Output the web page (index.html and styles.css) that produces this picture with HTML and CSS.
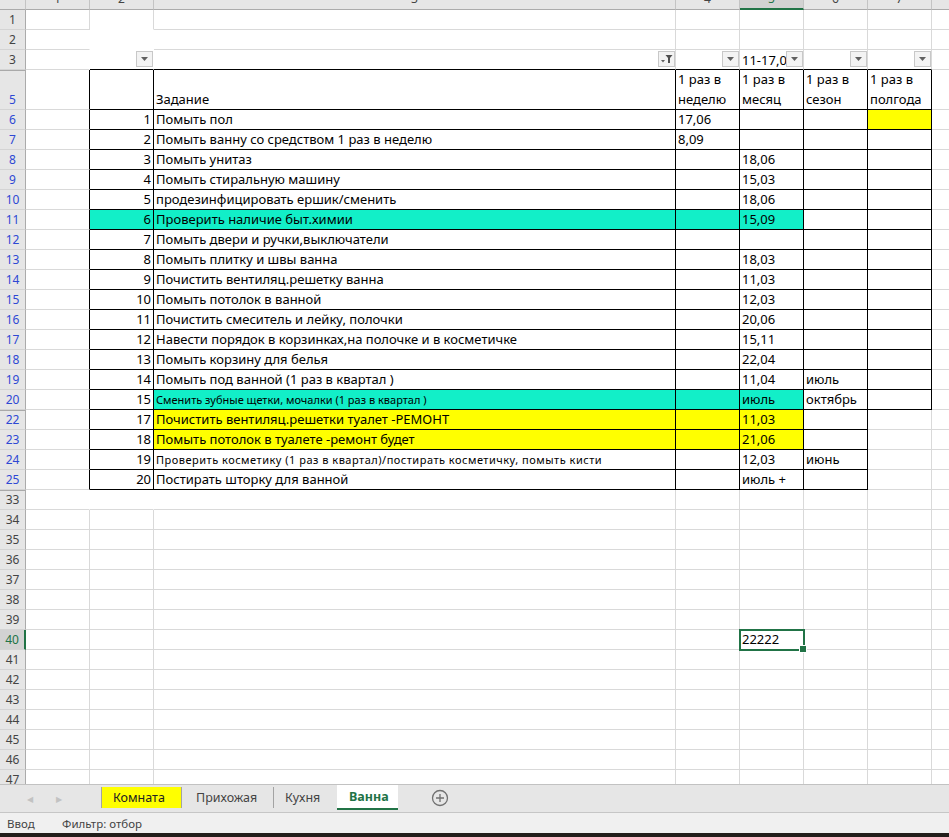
FILE: index.html
```html
<!DOCTYPE html>
<html lang="ru">
<head>
<meta charset="utf-8">
<title>Ванна</title>
<link rel="stylesheet" href="styles.css">
</head>
<body>
<div class="sheet">
  <div class="r hd"><span></span><span><em>1</em></span><span><em>2</em></span><span><em>3</em></span><span><em>4</em></span><span class="on"><em>5</em></span><span><em>6</em></span><span><em>7</em></span><span></span></div>

  <div class="r"><span class="rh">1</span><span></span><span class="nbm"></span><span></span><span></span><span></span><span></span><span></span><span></span></div>
  <div class="r"><span class="rh">2</span><span class="nr"></span><span class="nr nbm"></span><span></span><span></span><span></span><span></span><span></span><span></span></div>
  <div class="r"><span class="rh">3</span><span class="nr"></span>
    <span class="nr kb f"><i class="fb"><svg width="7" height="4" viewBox="0 0 7 4"><path d="M0 0h7L3.5 4z" fill="#606060"/></svg></i></span>
    <span class="kb f"><i class="fb"><svg width="12" height="10" viewBox="0 0 12 10"><path d="M0 6h4L2 8.5z" fill="#606060"/><path d="M4.5 1h7L9 4v5H7V4z" fill="#505050"/></svg></i></span>
    <span class="kb f"><i class="fb"><svg width="7" height="4" viewBox="0 0 7 4"><path d="M0 0h7L3.5 4z" fill="#606060"/></svg></i></span>
    <span class="kb f"><b class="tx">11-17,0</b><i class="fb"><svg width="7" height="4" viewBox="0 0 7 4"><path d="M0 0h7L3.5 4z" fill="#606060"/></svg></i></span>
    <span class="kb f"><i class="fb"><svg width="7" height="4" viewBox="0 0 7 4"><path d="M0 0h7L3.5 4z" fill="#606060"/></svg></i></span>
    <span class="kb f"><i class="fb"><svg width="7" height="4" viewBox="0 0 7 4"><path d="M0 0h7L3.5 4z" fill="#606060"/></svg></i></span>
    <span></span></div>

  <div class="r tall"><span class="rh b gap">5</span><span class="kl"></span><span class="k"></span><span class="k">Задание</span><span class="k">1 раз в<br>неделю</span><span class="k">1 раз в<br>месяц</span><span class="k">1 раз в<br>сезон</span><span class="k">1 раз в<br>полгода</span><span></span></div>

  <div class="r"><span class="rh b">6</span><span class="kl"></span><span class="k n">1</span><span class="k">Помыть пол</span><span class="k">17,06</span><span class="k"></span><span class="k"></span><span class="k ye"></span><span></span></div>
  <div class="r"><span class="rh b">7</span><span class="kl"></span><span class="k n">2</span><span class="k">Помыть ванну со средством 1 раз в неделю</span><span class="k">8,09</span><span class="k"></span><span class="k"></span><span class="k"></span><span></span></div>
  <div class="r"><span class="rh b">8</span><span class="kl"></span><span class="k n">3</span><span class="k">Помыть унитаз</span><span class="k"></span><span class="k">18,06</span><span class="k"></span><span class="k"></span><span></span></div>
  <div class="r"><span class="rh b">9</span><span class="kl"></span><span class="k n">4</span><span class="k">Помыть стиральную машину</span><span class="k"></span><span class="k">15,03</span><span class="k"></span><span class="k"></span><span></span></div>
  <div class="r"><span class="rh b">10</span><span class="kl"></span><span class="k n">5</span><span class="k">продезинфицировать ершик/сменить</span><span class="k"></span><span class="k">18,06</span><span class="k"></span><span class="k"></span><span></span></div>
  <div class="r"><span class="rh b">11</span><span class="kl"></span><span class="k n cy">6</span><span class="k cy">Проверить наличие быт.химии</span><span class="k cy"></span><span class="k cy">15,09</span><span class="k"></span><span class="k"></span><span></span></div>
  <div class="r"><span class="rh b">12</span><span class="kl"></span><span class="k n">7</span><span class="k">Помыть двери и ручки,выключатели</span><span class="k"></span><span class="k"></span><span class="k"></span><span class="k"></span><span></span></div>
  <div class="r"><span class="rh b">13</span><span class="kl"></span><span class="k n">8</span><span class="k">Помыть плитку и швы ванна</span><span class="k"></span><span class="k">18,03</span><span class="k"></span><span class="k"></span><span></span></div>
  <div class="r"><span class="rh b">14</span><span class="kl"></span><span class="k n">9</span><span class="k">Почистить вентиляц.решетку ванна</span><span class="k"></span><span class="k">11,03</span><span class="k"></span><span class="k"></span><span></span></div>
  <div class="r"><span class="rh b">15</span><span class="kl"></span><span class="k n">10</span><span class="k">Помыть потолок в ванной</span><span class="k"></span><span class="k">12,03</span><span class="k"></span><span class="k"></span><span></span></div>
  <div class="r"><span class="rh b">16</span><span class="kl"></span><span class="k n">11</span><span class="k">Почистить смеситель и лейку, полочки</span><span class="k"></span><span class="k">20,06</span><span class="k"></span><span class="k"></span><span></span></div>
  <div class="r"><span class="rh b">17</span><span class="kl"></span><span class="k n">12</span><span class="k">Навести порядок в корзинках,на полочке и в косметичке</span><span class="k"></span><span class="k">15,11</span><span class="k"></span><span class="k"></span><span></span></div>
  <div class="r"><span class="rh b">18</span><span class="kl"></span><span class="k n">13</span><span class="k">Помыть корзину для белья</span><span class="k"></span><span class="k">22,04</span><span class="k"></span><span class="k"></span><span></span></div>
  <div class="r"><span class="rh b">19</span><span class="kl"></span><span class="k n">14</span><span class="k">Помыть под ванной (1 раз в квартал )</span><span class="k"></span><span class="k">11,04</span><span class="k">июль</span><span class="k"></span><span></span></div>
  <div class="r"><span class="rh b">20</span><span class="kl"></span><span class="k n">15</span><span class="k cy sm">Сменить зубные щетки, мочалки (1 раз в квартал )</span><span class="k cy"></span><span class="k cy">июль</span><span class="k">октябрь</span><span class="k"></span><span></span></div>
  <div class="r"><span class="rh b gap">22</span><span class="kl"></span><span class="k n">17</span><span class="k ye">Почистить вентиляц.решетки туалет -РЕМОНТ</span><span class="k ye"></span><span class="k ye">11,03</span><span class="k"></span><span></span><span></span></div>
  <div class="r"><span class="rh b">23</span><span class="kl"></span><span class="k n">18</span><span class="k ye">Помыть потолок в туалете -ремонт будет</span><span class="k ye"></span><span class="k ye">21,06</span><span class="k"></span><span></span><span></span></div>
  <div class="r"><span class="rh b">24</span><span class="kl"></span><span class="k n">19</span><span class="k sm wide">Проверить косметику (1 раз в квартал)/постирать косметичку, помыть кисти</span><span class="k"></span><span class="k">12,03</span><span class="k">июнь</span><span></span><span></span></div>
  <div class="r"><span class="rh b">25</span><span class="kl"></span><span class="k n">20</span><span class="k">Постирать шторку для ванной</span><span class="k"></span><span class="k">июль +</span><span class="k"></span><span></span><span></span></div>

  <div class="r"><span class="rh gap">33</span><span class="nr"></span><span class="nr"></span><span></span><span></span><span></span><span></span><span></span><span></span></div>
  <div class="r"><span class="rh">34</span><span></span><span></span><span></span><span></span><span></span><span></span><span></span><span></span></div>
  <div class="r"><span class="rh">35</span><span></span><span></span><span></span><span></span><span></span><span></span><span></span><span></span></div>
  <div class="r"><span class="rh">36</span><span></span><span></span><span></span><span></span><span></span><span></span><span></span><span></span></div>
  <div class="r"><span class="rh">37</span><span></span><span></span><span></span><span></span><span></span><span></span><span></span><span></span></div>
  <div class="r"><span class="rh">38</span><span></span><span></span><span></span><span></span><span></span><span></span><span></span><span></span></div>
  <div class="r"><span class="rh">39</span><span></span><span></span><span></span><span></span><span></span><span></span><span></span><span></span></div>
  <div class="r"><span class="rh sel">40</span><span></span><span></span><span></span><span></span><span class="cur">22222</span><span></span><span></span><span></span></div>
  <div class="r"><span class="rh">41</span><span></span><span></span><span></span><span></span><span></span><span></span><span></span><span></span></div>
  <div class="r"><span class="rh">42</span><span></span><span></span><span></span><span></span><span></span><span></span><span></span><span></span></div>
  <div class="r"><span class="rh">43</span><span></span><span></span><span></span><span></span><span></span><span></span><span></span><span></span></div>
  <div class="r"><span class="rh">44</span><span></span><span></span><span></span><span></span><span></span><span></span><span></span><span></span></div>
  <div class="r"><span class="rh">45</span><span></span><span></span><span></span><span></span><span></span><span></span><span></span><span></span></div>
  <div class="r"><span class="rh">46</span><span></span><span></span><span></span><span></span><span></span><span></span><span></span><span></span></div>
  <div class="r"><span class="rh">47</span><span></span><span></span><span></span><span></span><span></span><span></span><span></span><span></span></div>
</div>

<div class="tabs">
  <span class="nav nav1">&#9664;</span><span class="nav">&#9654;</span>
  <div class="tablist">
    <i class="sep"></i>
    <span class="tab t1">Комната</span>
    <i class="sep"></i>
    <span class="tab t2">Прихожая</span>
    <i class="sep"></i>
    <span class="tab t3">Кухня</span>
    <span class="tab act">Ванна</span>
  </div>
  <svg class="add" width="18" height="18" viewBox="0 0 18 18"><circle cx="9" cy="9" r="7.5" fill="none" stroke="#707070" stroke-width="1.3"/><path d="M9 5v8M5 9h8" stroke="#707070" stroke-width="1.3"/></svg>
</div>
<div class="status"><span class="st1">Ввод</span><span>Фильтр: отбор</span></div>
<div class="strip"></div>
</body>
</html>
```
FILE: styles.css
```css
* { box-sizing: border-box; margin: 0; padding: 0; }
html, body { width: 949px; height: 837px; overflow: hidden; background: #fff; }
body { display: flex; flex-direction: column; font-family: "Noto Sans", "Open Sans", sans-serif; color: #000; }

.sheet { height: 784px; overflow: hidden; flex: none; }

.r { display: grid; grid-template-columns: 26px 64px 64px 522px 64px 64px 64px 64px 17px; height: 20px; }
.r.tall { height: 40px; }
.r > span {
  border-right: 1px solid #d9d9d9;
  border-bottom: 1px solid #d9d9d9;
  font-size: 13px;
  line-height: 19px;
  padding: 0 2px;
  white-space: nowrap;
  overflow: hidden;
}
.r > span:last-child { border-right: 0; }
.tall > span { display: flex; align-items: flex-end; white-space: normal; line-height: 19.5px; }

/* column header */
.hd { height: 10px; }
.hd > span {
  background: #e6e6e6;
  border-right: 1px solid #c4c4c4;
  border-bottom: 1px solid #ababab;
  font-size: 12px;
  color: #444;
  text-align: center;
  padding: 0;
  line-height: 20px;
}
.hd > span:last-child { border-right: 0; }
.hd > span em { display: block; font-style: normal; margin-top: -11px; }
.hd > .on { background: #d2d2d2; border-bottom: 2px solid #217346; color: #217346; }

/* row header */
.r > .rh {
  background: #e6e6e6;
  border-right: 1px solid #ababab;
  border-bottom: 1px solid #d4d4d4;
  color: #444;
  font-size: 12px;
  text-align: center;
  padding: 0;
  line-height: 19px;
}
.tall > .rh { justify-content: center; }
.r > .rh.b { color: #2e48d4; }
.r > .rh.gap { box-shadow: inset 0 1px 0 #a9a9a9; }
.r > .rh.sel { background: #d2d2d2; color: #217346; border-right: 2px solid #217346; }

/* gridline removal */
.r > .nr { border-right-color: transparent; }
.r > .nbm { border-bottom-color: transparent; }

/* table borders */
.r > .k { border-right-color: #000; border-bottom-color: #000; }
.r > .kl { border-right-color: #000; }
.r > .kb { border-bottom-color: #000; }

.n { text-align: right; }
.r > .sm { font-size: 11px; }
.r > .wide { letter-spacing: 0.5px; }
.cy { background: #12efc8; }
.ye { background: #ffff00; }

/* filter buttons */
.r > .f { display: flex; justify-content: flex-end; align-items: flex-start; padding: 1px 0 0 2px; }
.tx { flex: 1; overflow: hidden; font-weight: normal; line-height: 18px; white-space: nowrap; }
.fb {
  width: 17px; height: 16px; flex: none;
  border: 1px solid #c8c8c8; background: #f3f3f3;
  display: flex; align-items: center; justify-content: center;
}

/* active cell */
.r > .cur { position: relative; overflow: visible; outline: 2px solid #217346; outline-offset: -1px; }
.cur::after {
  content: ""; position: absolute; right: -4px; bottom: -4px;
  width: 6px; height: 6px; background: #217346; border: 1px solid #fff;
}

/* sheet tabs */
.tabs {
  height: 28px; flex: none; background: #e6e6e6; border-top: 1px solid #c2c2c2;
  display: flex; align-items: stretch; font-size: 12.5px; color: #444;
}
.nav { width: 29px; display: flex; align-items: center; justify-content: center; color: #c2c2c2; font-size: 8px; }
.nav1 { margin-left: 15px; }
.tablist { margin-left: 28px; display: flex; align-items: stretch; }
.sep { width: 1px; background: #a3a3a3; margin: 2px 0 4px; }
.tab { display: flex; align-items: center; margin: 2px 0 4px; }
.t1 { width: 79px; padding-left: 11px; background: #ffff00; color: #222; }
.t2 { width: 91px; padding-left: 14px; }
.t3 { width: 63px; padding-left: 11px; }
.act {
  width: 61px; padding-left: 12px; margin: 0 0 2px; background: #fff;
  color: #217346; font-weight: bold; border-bottom: 2px solid #217346;
}
.add { margin: 4px 0 0 33px; }

/* status bar */
.status {
  height: 21px; flex: none; background: #f0f0f0; border-top: 1px solid #c6c6c6;
  display: flex; align-items: center; font-size: 11.5px; color: #444; padding-left: 7px;
}
.st1 { width: 55px; }
.strip { height: 4px; flex: none; background: #221e1a; }
```
